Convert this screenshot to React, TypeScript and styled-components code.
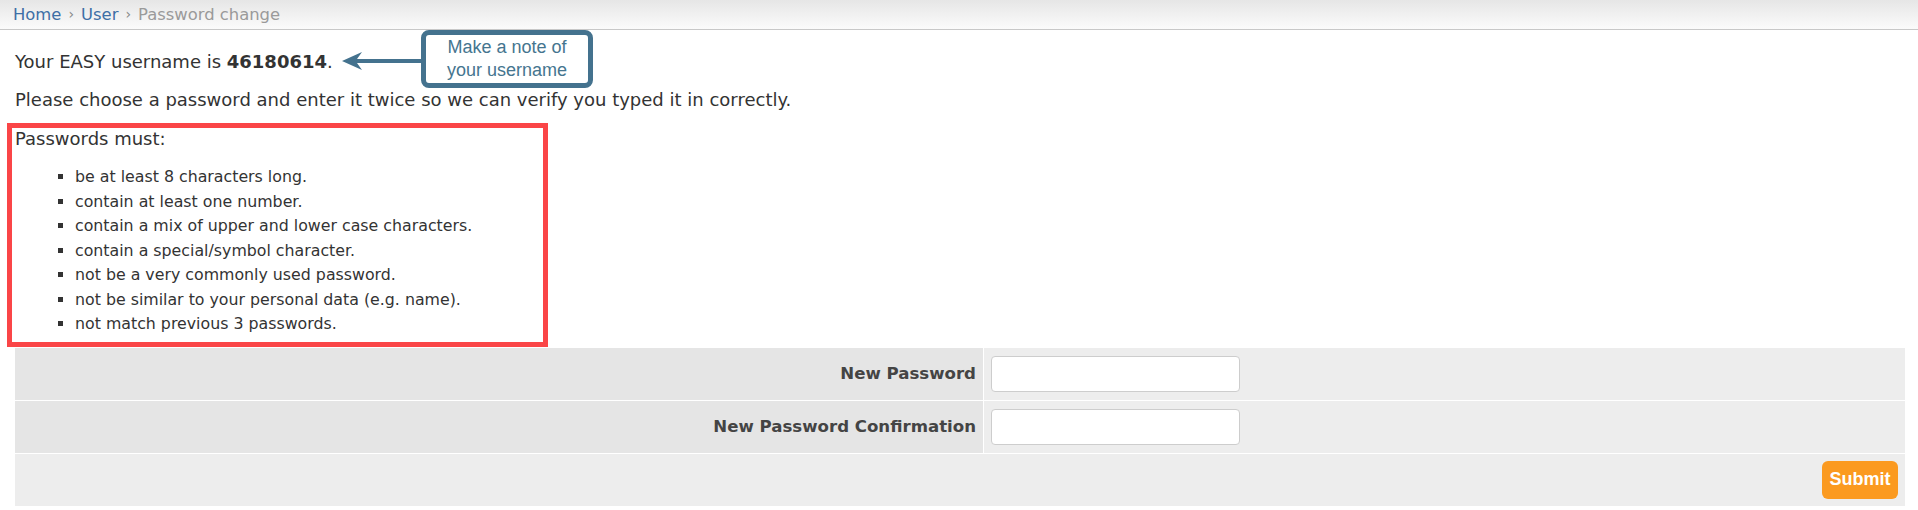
import React from "react";
import styled, { createGlobalStyle } from "styled-components";

const GlobalStyle = createGlobalStyle`
  html, body {
    margin: 0;
    padding: 0;
    background: #ffffff;
  }
  body {
    font-family: "DejaVu Sans", Verdana, sans-serif;
    font-size: 18px;
    color: #333333;
  }
  * { box-sizing: border-box; }
`;

const Breadcrumb = styled.nav`
  height: 30px;
  display: flex;
  align-items: center;
  padding: 0 0 1px 13px;
  background: linear-gradient(#e6e6e6, #fbfbfb);
  border-bottom: 1px solid #c8c8c8;
  font-size: 16.4px;
`;

const Crumb = styled.a<{ $current?: boolean }>`
  color: ${(p) => (p.$current ? "#9a9a9a" : "#3e6fa6")};
  text-decoration: none;
`;

const Sep = styled.span`
  color: #888888;
  margin: 0 7px;
  font-size: 14px;
`;

const Content = styled.main`
  position: relative;
  padding: 22px 13px 0 15px;
`;

const Para = styled.p<{ $mt?: number }>`
  margin: ${(p) => p.$mt ?? 0}px 0 0 0;
  line-height: 20px;
`;

const Callout = styled.div`
  position: absolute;
  left: 342px;
  top: 0;
  display: flex;
  align-items: flex-start;
`;

const Arrow = styled.svg`
  display: block;
  margin-top: 21px;
  margin-right: -1px;
`;

const NoteBox = styled.div`
  width: 172px;
  height: 58px;
  border: 5px solid #44728e;
  border-radius: 8px;
  background: #ffffff;
  display: flex;
  align-items: center;
  justify-content: center;
  text-align: center;
  font-family: "Liberation Sans", Arial, sans-serif;
  font-size: 18px;
  line-height: 23px;
  color: #45758f;
`;

const Rules = styled.section`
  width: 541px;
  margin: 13px 0 0 -8px;
  border: 5px solid #fa4547;
  padding: 1px 3px 5px 3px;
`;

const RulesList = styled.ul`
  margin: 16px 0 0 0;
  padding-left: 60px;
  list-style: square;
  font-size: 15.8px;
`;

const Rule = styled.li`
  line-height: 24.5px;
`;

const FormGrid = styled.div`
  margin-top: 1px;
  display: grid;
  grid-template-columns: 968px 1fr;
  grid-auto-rows: 52px;
  gap: 1px;
  background: #ffffff;
`;

const LabelCell = styled.label`
  background: #e5e5e5;
  display: flex;
  align-items: center;
  justify-content: flex-end;
  padding-right: 7px;
  font-weight: bold;
  font-size: 16.6px;
  color: #444444;
`;

const FieldCell = styled.div`
  background: #ededed;
  display: flex;
  align-items: center;
  padding-left: 7px;
`;

const TextInput = styled.input`
  width: 249px;
  height: 36px;
  border: 1px solid #cdcdcd;
  border-radius: 4px;
  background: #ffffff;
  outline: none;
`;

const Footer = styled.div`
  grid-column: 1 / span 2;
  background: #ededed;
  display: flex;
  align-items: center;
  justify-content: flex-end;
  padding-right: 7px;
`;

const SubmitButton = styled.button`
  height: 38px;
  padding: 0 7.5px;
  border: none;
  border-radius: 6px;
  background: #fb9a20;
  color: #ffffff;
  font-family: "Liberation Sans", Arial, sans-serif;
  font-weight: bold;
  font-size: 18px;
  cursor: pointer;
`;

const rules = [
  "be at least 8 characters long.",
  "contain at least one number.",
  "contain a mix of upper and lower case characters.",
  "contain a special/symbol character.",
  "not be a very commonly used password.",
  "not be similar to your personal data (e.g. name).",
  "not match previous 3 passwords.",
];

export default function App() {
  return (
    <>
      <GlobalStyle />
      <Breadcrumb>
        <Crumb href="#">Home</Crumb>
        <Sep>›</Sep>
        <Crumb href="#">User</Crumb>
        <Sep>›</Sep>
        <Crumb $current>Password change</Crumb>
      </Breadcrumb>
      <Content>
        <Para>
          Your EASY username is <strong>46180614</strong>.
        </Para>
        <Para $mt={18}>
          Please choose a password and enter it twice so we can verify you typed it in correctly.
        </Para>
        <Callout>
          <Arrow width="80" height="20" viewBox="0 0 80 20">
            <polygon points="0,10 20,1 15,8 80,8 80,12 15,12 20,19" fill="#44728e" />
          </Arrow>
          <NoteBox>
            Make a note of
            <br />
            your username
          </NoteBox>
        </Callout>
        <Rules>
          <Para>Passwords must:</Para>
          <RulesList>
            {rules.map((r) => (
              <Rule key={r}>{r}</Rule>
            ))}
          </RulesList>
        </Rules>
        <FormGrid>
          <LabelCell htmlFor="pw1">New Password</LabelCell>
          <FieldCell>
            <TextInput id="pw1" type="password" />
          </FieldCell>
          <LabelCell htmlFor="pw2">New Password Confirmation</LabelCell>
          <FieldCell>
            <TextInput id="pw2" type="password" />
          </FieldCell>
          <Footer>
            <SubmitButton type="submit">Submit</SubmitButton>
          </Footer>
        </FormGrid>
      </Content>
    </>
  );
}
